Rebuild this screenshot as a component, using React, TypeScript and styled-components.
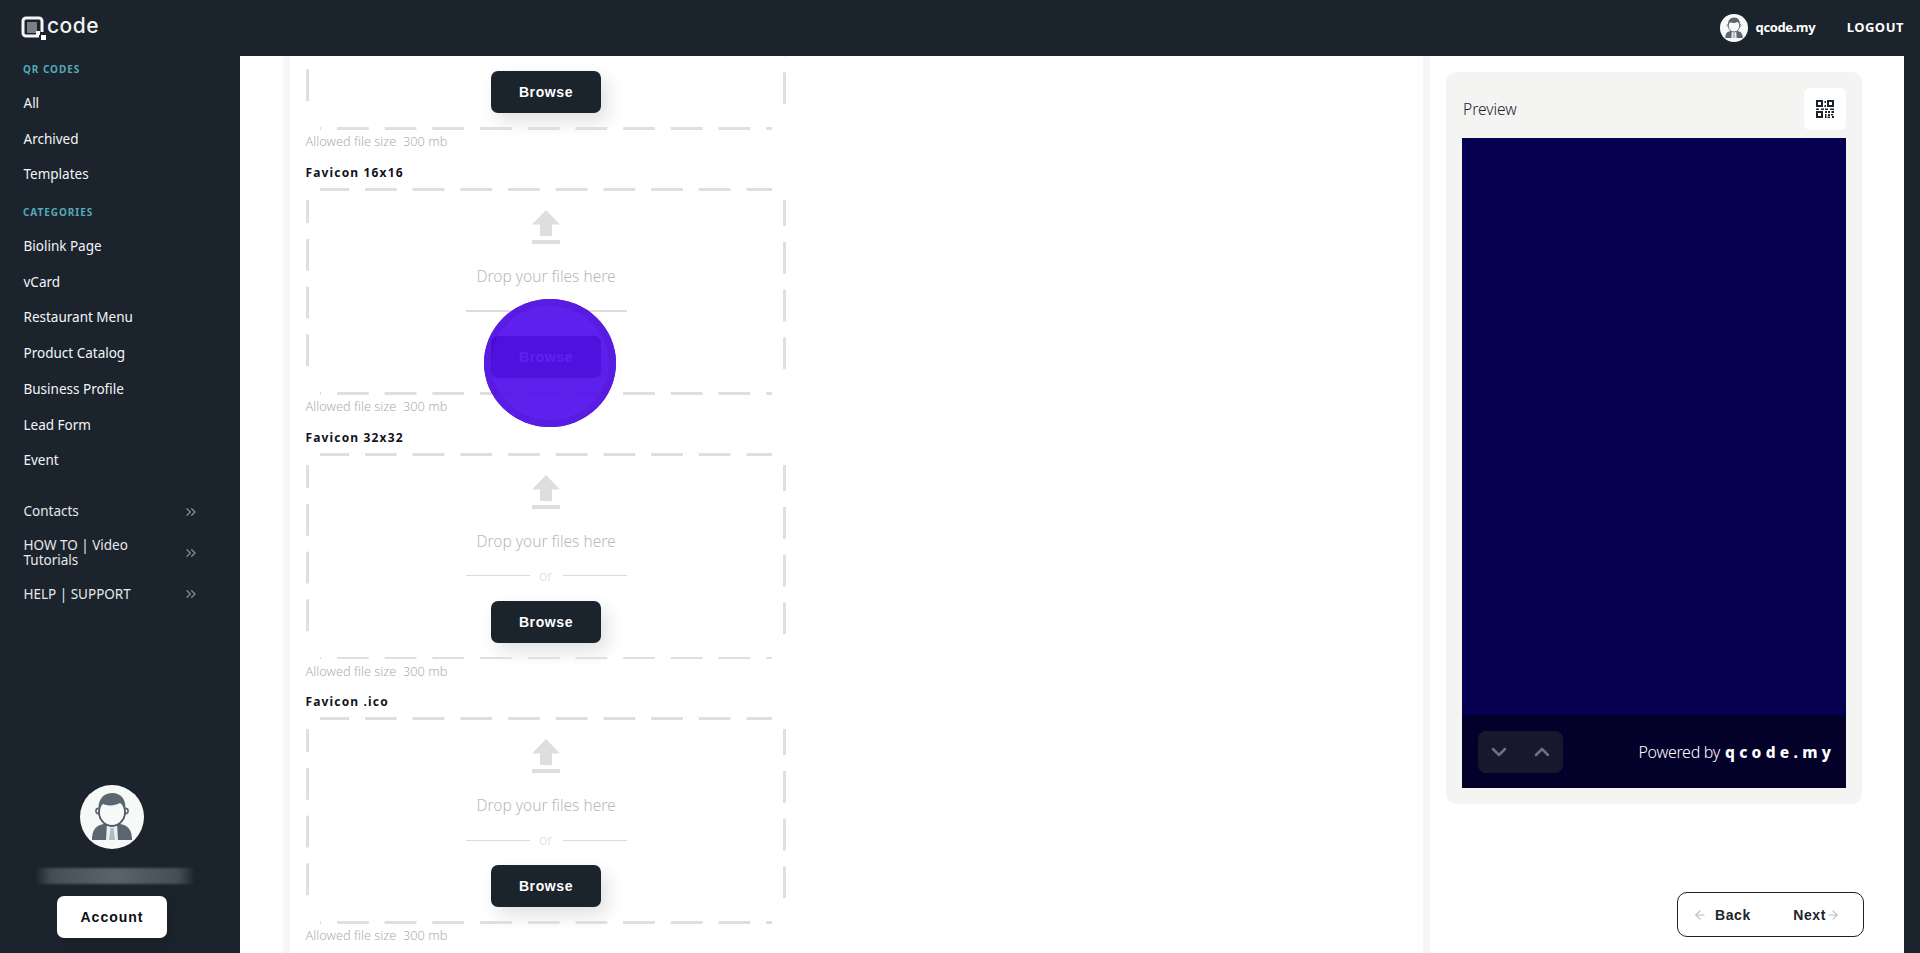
import React from "react";
import styled, { createGlobalStyle } from "styled-components";
import { ArrowLeft, ArrowRight, ChevronDown, ChevronUp, ChevronsRight } from "lucide-react";

const DARK = "#1b232c";
const UI = `"Noto Sans", "Open Sans", sans-serif`;
const BOLD = `"Liberation Sans", Arial, sans-serif`;

const Global = createGlobalStyle`
  html, body { margin: 0; padding: 0; height: 100%; overflow: hidden; background: #fff; }
  * { box-sizing: border-box; }
  body { font-family: ${UI}; }
`;

const Page = styled.div`
  height: 953px; display: flex; flex-direction: column; overflow: hidden;
`;
const TopBar = styled.header`
  height: 56px; flex: none; background: ${DARK}; display: flex; align-items: center;
  padding: 0 16px 0 21px;
`;
const Logo = styled.div`
  display: flex; align-items: center; gap: 0; color: #fff; margin-top: 1px;
`;
const LogoWord = styled.span`
  font-family: "Inter", sans-serif; font-weight: 500; font-size: 21px; letter-spacing: 0.5px; line-height: 24px;
  color: #f2f2f2; margin-top: -6px;
`;
const TopRight = styled.div`
  margin-left: auto; display: flex; align-items: center;
`;
const UserName = styled.span`
  margin-left: 8px; color: #fff; font-size: 13px; font-weight: 700; letter-spacing: -0.4px; margin-top: -2px;
`;
const Logout = styled.span`
  margin-left: 31.5px; color: #fff; font-size: 13px; font-weight: 700; letter-spacing: 0.5px; margin-top: -2px;
`;
const Body = styled.div`
  flex: 1; display: flex; min-height: 0;
`;
const Sidebar = styled.aside`
  width: 240px; flex: none; background: ${DARK}; display: flex; flex-direction: column;
  padding: 5px 16px 15px 0;
`;
const SectionTitle = styled.div<{ $top?: number }>`
  margin: ${p => p.$top ?? 0}px 0 8px 23px; height: 16px; line-height: 16px;
  font-size: 10px; font-weight: 700; letter-spacing: 0.95px; color: #56a8b9; text-transform: uppercase;
`;
const NavItem = styled.div`
  height: 35.7px; line-height: 37.7px; padding-left: 23.5px; color: #f4f5f6; font-size: 13.5px;
`;
const ExpandItem = styled.div<{ $top?: number }>`
  min-height: 35.7px; margin-top: ${p => p.$top ?? 0}px; padding: 8.5px 27px 8.5px 23.5px;
  display: flex; align-items: center; justify-content: space-between; gap: 8px;
  color: #e6e8ea; font-size: 13.5px; line-height: 15px;
  svg { flex: none; color: #858a90; margin-right: -2px; }
`;
const ExpandLabel = styled.span`
  max-width: 125px;
`;
const Profile = styled.div`
  margin-top: auto; display: flex; flex-direction: column; align-items: center;
`;
const NameBlur = styled.div`
  width: 160px; height: 16px; margin: 19px 0 0 6px;
  background: linear-gradient(90deg, transparent, #454d55 10%, #5c646b 50%, #454d55 90%, transparent);
  filter: blur(1px);
`;
const AccountButton = styled.button`
  width: 110px; height: 42px; margin-top: 12px; border: 0; border-radius: 7px; background: #fff;
  font-family: ${BOLD}; font-weight: 700; font-size: 14px; letter-spacing: 1px; color: #0e0e14;
  box-shadow: 4px 4px 14px rgba(0,0,0,.12);
`;
const Main = styled.main`
  flex: 1; display: flex; min-width: 0; background: #fff; padding-left: 43px;
`;
const FormColumn = styled.section`
  width: 1147px; flex: none; border-left: 7px solid #f6f6f6; border-right: 7px solid #f6f6f6;
  padding-left: 16px; overflow: hidden; position: relative;
`;
const FormList = styled.div`
  margin-top: -155.67px; display: flex; flex-direction: column; gap: 14.67px; width: 480px;
`;
const Block = styled.div`
  display: flex; flex-direction: column;
`;
const FieldLabel = styled.div`
  height: 16px; margin-left: -0.5px; line-height: 16px; font-size: 12px; font-weight: 700; letter-spacing: 1.15px; color: #10121c;
`;
const DropBox = styled.div`
  position: relative; height: 206.5px; margin-top: 7px; display: flex; flex-direction: column; align-items: center;
  padding-top: 22px;
  &::before {
    content: ""; position: absolute; top: 0; bottom: 0; left: 14px; right: 14px; pointer-events: none;
    background-image: linear-gradient(90deg, #dfdfdf 32px, transparent 32px), linear-gradient(90deg, #dfdfdf 32px, transparent 32px);
    background-size: 47.7px 2.5px, 47.7px 2.5px;
    background-repeat: repeat-x, repeat-x;
    background-position: 45px 0, 17px 100%;
  }
  &::after {
    content: ""; position: absolute; top: 12px; bottom: 16px; left: 0; right: 0; pointer-events: none;
    background-image: linear-gradient(180deg, #dfdfdf 32px, transparent 32px), linear-gradient(180deg, #dfdfdf 32px, transparent 32px);
    background-size: 2.5px 47.7px, 3px 47.7px;
    background-repeat: repeat-y, repeat-y;
    background-position: 0 39px, 476.5px 42px;
  }
`;
const DropText = styled.div`
  margin-top: 18px; height: 28px; line-height: 28px; font-size: 15.5px; font-weight: 300; color: #b8b8c0;
`;
const OrRow = styled.div`
  margin-top: 11px; width: 161px; height: 20px; display: flex; align-items: center; justify-content: space-between;
  color: #dcdcdf; font-size: 14px; line-height: 20px; font-weight: 300;
`;
const OrLine = styled.span`
  width: 64px; height: 1.5px; background: #dcdcdc;
`;
const BrowseButton = styled.button`
  width: 110px; height: 42px; margin-top: 15px; border: 0; border-radius: 7px; background: ${DARK}; color: #fff;
  font-family: ${BOLD}; font-weight: 700; font-size: 14px; letter-spacing: 0.6px;
  box-shadow: 6px 8px 18px rgba(27,35,44,.14);
`;
const Allowed = styled.div`
  margin: 2.5px 0 0 -0.5px; height: 18px; line-height: 18px; font-size: 12.8px; font-weight: 300; color: #aeaeb6; white-space: pre;
`;
const Touch = styled.div`
  position: absolute; left: 194px; top: 243px; width: 132px; height: 128px; border-radius: 50%;
  background: #5311ec; opacity: 0.93; box-shadow: inset 0 0 0 7px #4d0be0;
`;
const PreviewColumn = styled.section`
  width: 474px; flex: none; padding: 16px 42px 0 16px; display: flex; flex-direction: column;
`;
const PreviewCard = styled.div`
  height: 732px; background: #f4f4f3; border-radius: 10px; padding: 16px; display: flex; flex-direction: column;
`;
const PreviewHead = styled.div`
  height: 50px; display: flex; align-items: flex-start; justify-content: space-between;
`;
const PreviewTitle = styled.div`
  margin-top: 7px; line-height: 28px; font-size: 15.5px; font-weight: 300; color: #20242c; padding-left: 1px;
`;
const QrButton = styled.div`
  width: 42px; height: 42px; background: #fff; border-radius: 6px; display: flex; align-items: center; justify-content: center;
`;
const Screen = styled.div`
  flex: 1; background: #05004f; display: flex; flex-direction: column; justify-content: flex-end;
`;
const ScreenFooter = styled.div`
  height: 73px; background: #03002a; display: flex; align-items: center; justify-content: space-between;
  padding: 0 15px 0 16px;
`;
const Pager = styled.div`
  display: flex; width: 85px; height: 42px; border-radius: 8px; background: #18182c; overflow: hidden;
`;
const PagerButton = styled.div`
  flex: 1; display: flex; align-items: center; justify-content: center; color: #6f6f82;
`;
const Powered = styled.div`
  color: #fff; font-size: 16px; font-weight: 300; letter-spacing: -0.3px; display: flex; align-items: baseline;
`;
const PoweredBrand = styled.span`
  margin-left: 5px; font-weight: 800; letter-spacing: 4.3px; font-size: 15.5px; margin-right: -4.3px; color: #fff;
`;
const StepNav = styled.div`
  align-self: flex-end; margin: 88px -2px 0 0; width: 187px; height: 45px; border: 1px solid ${DARK}; border-radius: 10px;
  display: flex; align-items: center; justify-content: space-between; padding: 0 23px 0 15px;
  font-family: ${BOLD}; font-weight: 700; font-size: 14px; letter-spacing: 0.6px; color: #20242c;
  svg { color: #bcbcc2; }
`;
const StepPart = styled.span`
  display: flex; align-items: center;
`;
const StepBack = styled(StepPart)`
  gap: 8px;
`;
const StepNext = styled(StepPart)`
  gap: 0;
`;
const Rail = styled.div`
  width: 16px; flex: none; background: ${DARK}; margin-left: auto;
`;

function Avatar({ size }: { size: number }) {
  return (
    <svg width={size} height={size} viewBox="0 0 64 64" aria-hidden="true">
      <circle cx="32" cy="32" r="32" fill="#f7f8f8" />
      <path d="M12 55c0-9 3-13 8-15l7-2 5 6 5-6 7 2c5 2 8 6 8 15z" fill="#5c6670" />
      <path d="M27 38l5 6 5-6 1 17H26z" fill="#e9eeee" />
      <path d="M30.5 43h3l1.5 12h-6z" fill="#a9c0c0" />
      <circle cx="18.500" cy="26" r="2.600" fill="#f7f8f8" stroke="#5c6670" strokeWidth="1.600" />
      <circle cx="45.500" cy="26" r="2.600" fill="#f7f8f8" stroke="#5c6670" strokeWidth="1.600" />
      <ellipse cx="32" cy="27" rx="13" ry="14" fill="#f7f8f8" stroke="#4f5963" strokeWidth="1.800" />
      <path d="M19 26c-2-9 3-18 13-18s15 8 13 18c-1-5-3-7-5-8-5 3-13 3-17 1-2 1-3 4-4 7z" fill="#5c6670" />
    </svg>
  );
}

function LogoMark() {
  return (
    <svg width="26" height="26" viewBox="0 0 26 26" aria-hidden="true">
      <path d="M18 20H5a3 3 0 0 1-3-3V5a3 3 0 0 1 3-3h13a3 3 0 0 1 3 3v11" fill="none" stroke="#f5f5f5" strokeWidth="3" />
      <rect x="6" y="6" width="10" height="11" fill="#c9ccd0" opacity=".55" />
      <rect x="15" y="15" width="4" height="4" fill="#f5f5f5" />
      <rect x="20" y="19" width="5" height="5" fill="#fff" />
    </svg>
  );
}

function QrIcon() {
  const c = DARK;
  return (
    <svg width="20" height="20" viewBox="0 0 20 20" aria-hidden="true">
      <path fillRule="evenodd" fill={c} d="M1 1h7v7H1zM3 3v3h3V3zM12 1h7v7h-7zM14 3v3h3V3zM1 12h7v7H1zM3 14v3h3v-3z" />
      <path fill={c} d="M9.500 2h1.500v2H9.500zM9.500 6h1.500v2H9.500zM1 9.500h3V11H1zM6 9.500h3V11H6zM10 9.500h3V11h-3zM15 9.500h4V11h-4zM10 12h2v2h-2zM13 12h2v2h-2zM16.500 12H19v2h-2.500zM10 15h1.500v4H10zM13 15h2v2h-2zM16 15h2v1.500h-2zM12.500 17.500H15V19h-2.500zM17 17h2v2h-2z" />
    </svg>
  );
}

function UploadIcon() {
  return (
    <svg width="28" height="34" viewBox="0 0 28 34" aria-hidden="true">
      <path d="M14 0l14 14.500h-8V26H8V14.500H0z" fill="#dedede" />
      <rect y="30" width="28" height="4" fill="#dedede" />
    </svg>
  );
}

/* The first block is scrolled past the top of the panel: only its button and
   size note are in view, so its upper texts are left out. */
function Upload({ label, scrolled }: { label?: string; scrolled?: boolean }) {
  return (
    <Block>
      <FieldLabel>{label}</FieldLabel>
      <DropBox>
        <UploadIcon />
        <DropText>{scrolled ? null : "Drop your files here"}</DropText>
        <OrRow>
          <OrLine />
          <span>{scrolled ? null : "or"}</span>
          <OrLine />
        </OrRow>
        <BrowseButton>Browse</BrowseButton>
      </DropBox>
      <Allowed>{"Allowed file size  300 mb"}</Allowed>
    </Block>
  );
}

export default function App() {
  return (
    <Page>
      <Global />
      <TopBar>
        <Logo>
          <LogoMark />
          <LogoWord>code</LogoWord>
        </Logo>
        <TopRight>
          <Avatar size={28} />
          <UserName>qcode.my</UserName>
          <Logout>LOGOUT</Logout>
        </TopRight>
      </TopBar>
      <Body>
        <Sidebar>
          <SectionTitle>QR Codes</SectionTitle>
          {["All", "Archived", "Templates"].map(t => <NavItem key={t}>{t}</NavItem>)}
          <SectionTitle $top={12}>Categories</SectionTitle>
          {["Biolink Page", "vCard", "Restaurant Menu", "Product Catalog", "Business Profile", "Lead Form", "Event"].map(t => (
            <NavItem key={t}>{t}</NavItem>
          ))}
          <ExpandItem $top={16}><ExpandLabel>Contacts</ExpandLabel><ChevronsRight size={16} /></ExpandItem>
          <ExpandItem><ExpandLabel>HOW TO | Video Tutorials</ExpandLabel><ChevronsRight size={16} /></ExpandItem>
          <ExpandItem><ExpandLabel>HELP | SUPPORT</ExpandLabel><ChevronsRight size={16} /></ExpandItem>
          <Profile>
            <Avatar size={64} />
            <NameBlur />
            <AccountButton>Account</AccountButton>
          </Profile>
        </Sidebar>
        <Main>
          <FormColumn>
            <FormList>
              <Upload scrolled />
              <Upload label="Favicon 16x16" />
              <Upload label="Favicon 32x32" />
              <Upload label="Favicon .ico" />
            </FormList>
            <Touch />
          </FormColumn>
          <PreviewColumn>
            <PreviewCard>
              <PreviewHead>
                <PreviewTitle>Preview</PreviewTitle>
                <QrButton><QrIcon /></QrButton>
              </PreviewHead>
              <Screen>
                <ScreenFooter>
                  <Pager>
                    <PagerButton><ChevronDown size={24} strokeWidth={2.5} /></PagerButton>
                    <PagerButton><ChevronUp size={24} strokeWidth={2.5} /></PagerButton>
                  </Pager>
                  <Powered>Powered by<PoweredBrand>qcode.my</PoweredBrand></Powered>
                </ScreenFooter>
              </Screen>
            </PreviewCard>
            <StepNav>
              <StepBack><ArrowLeft size={14} />Back</StepBack>
              <StepNext>Next<ArrowRight size={14} /></StepNext>
            </StepNav>
          </PreviewColumn>
          <Rail />
        </Main>
      </Body>
    </Page>
  );
}
